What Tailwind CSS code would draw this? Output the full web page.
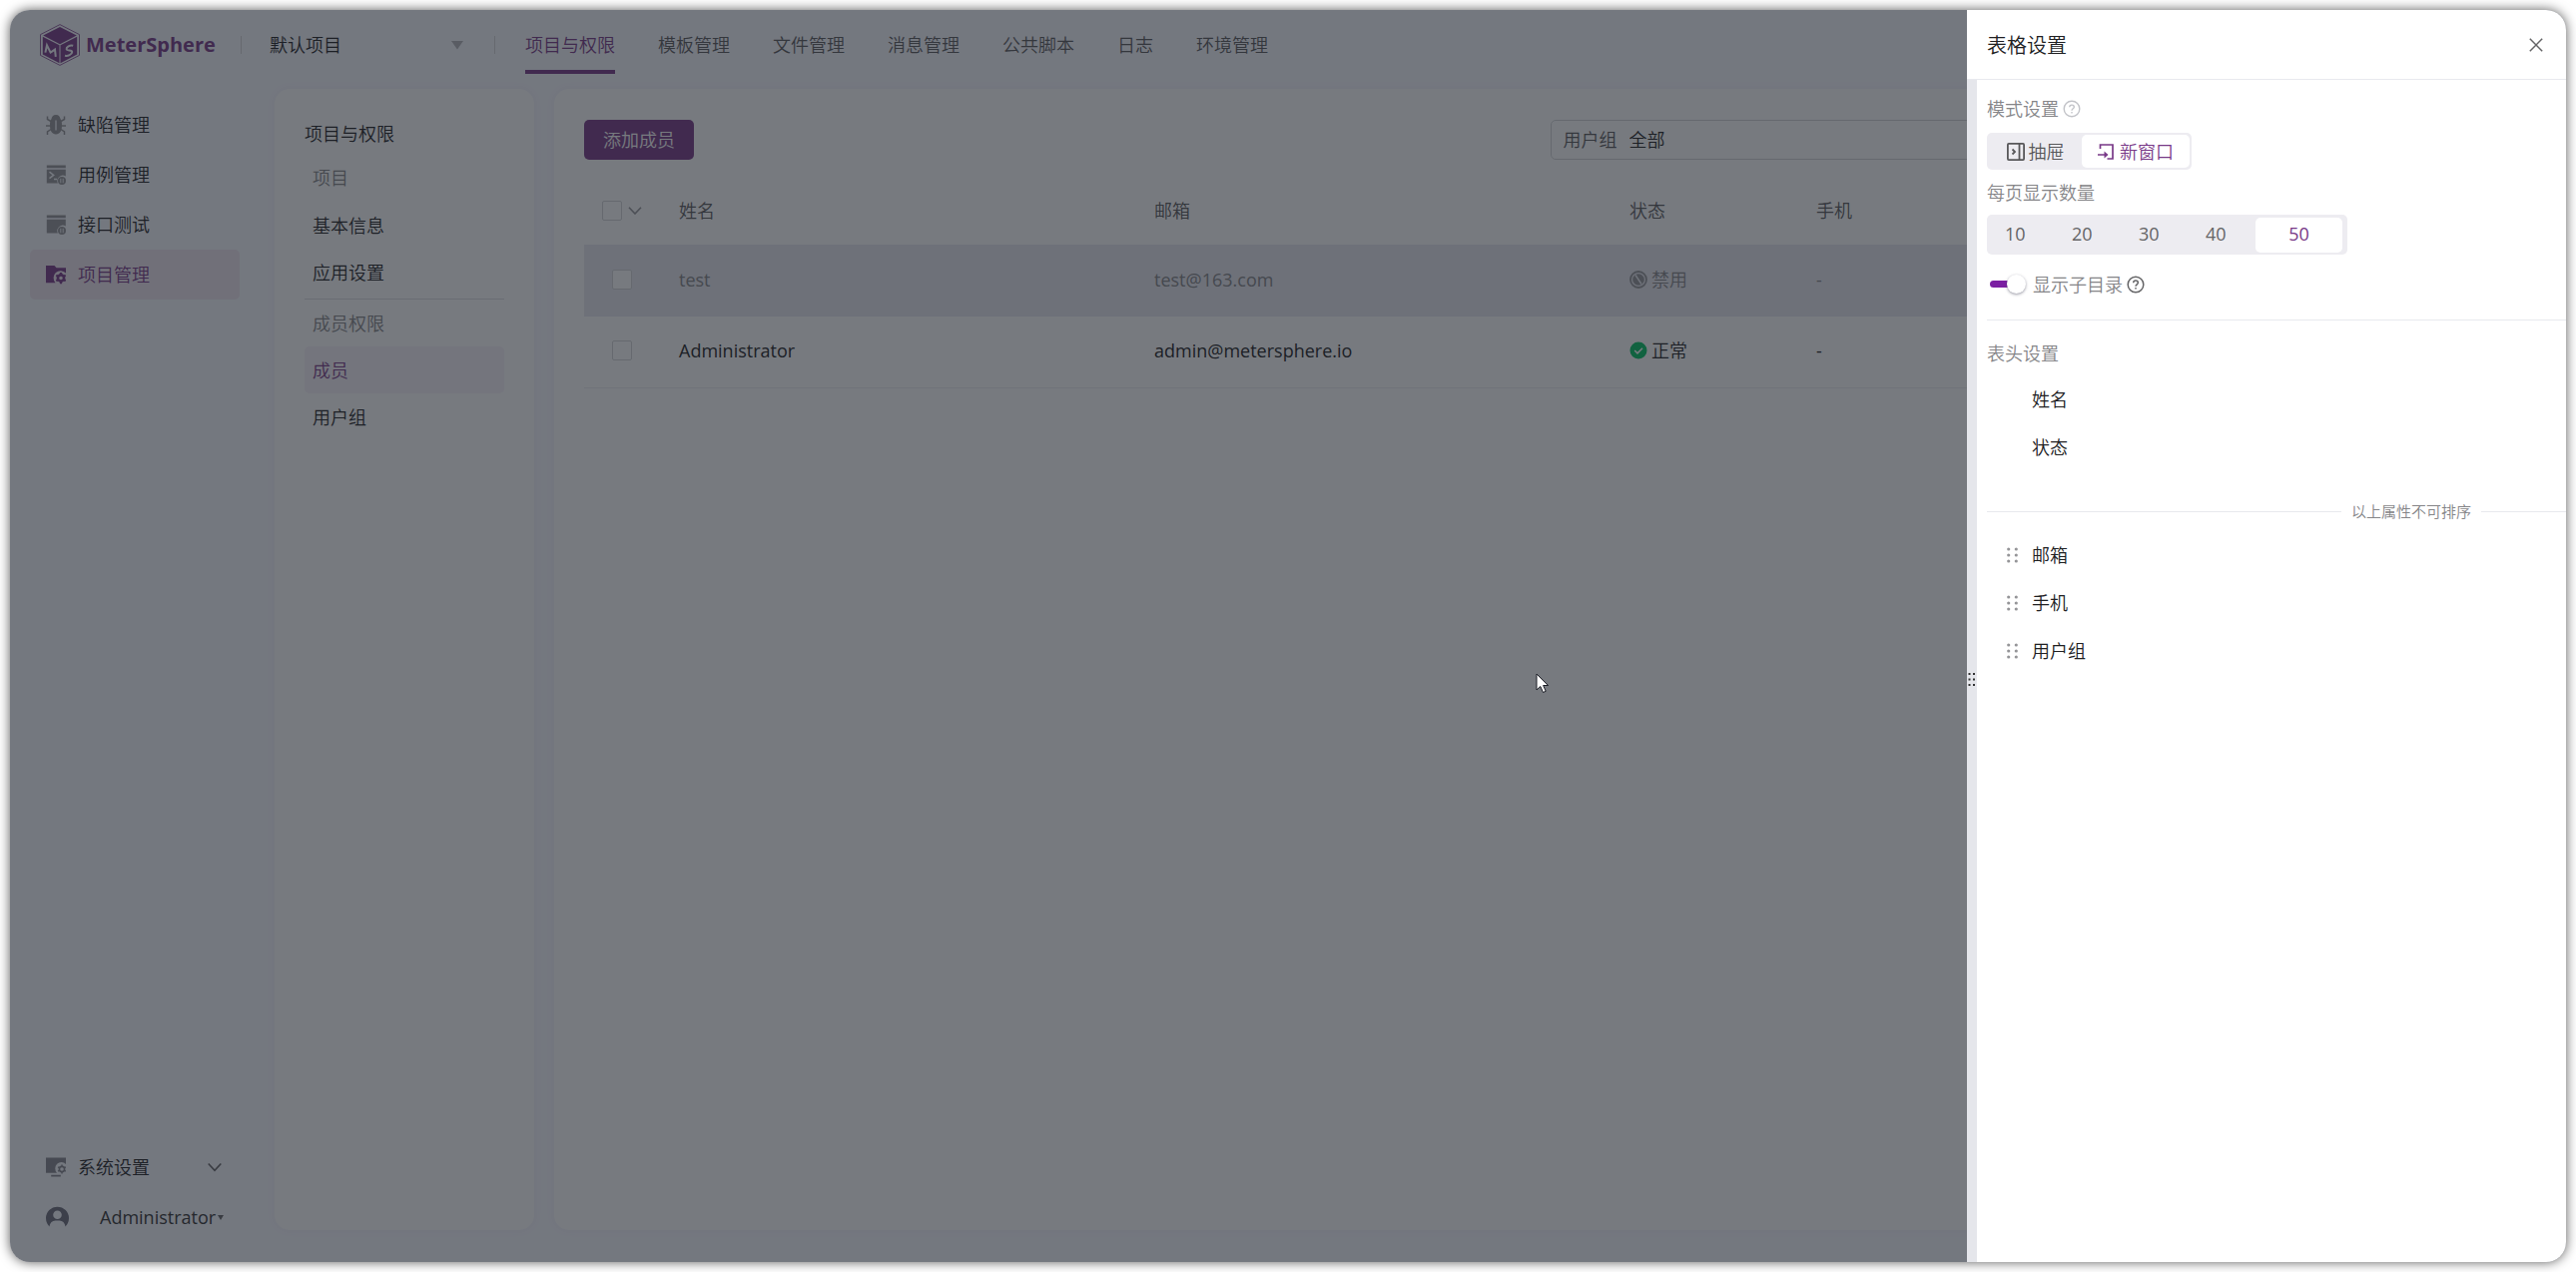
<!DOCTYPE html>
<html lang="zh-CN">
<head>
<meta charset="utf-8">
<meta name="viewport" content="width=device-width, initial-scale=1">
<title>MeterSphere</title>
<script src="https://cdn.jsdelivr.net/npm/@tailwindcss/browser@4"></script>
</head>
<body class="flex min-h-screen bg-white p-2.5 font-['Open_Sans','Noto_Sans_CJK_SC',sans-serif] text-lg/6 font-[350] text-[#202022]">
<div class="relative flex min-w-0 flex-1 flex-col overflow-hidden rounded-[20px] bg-[#f8f9ff] shadow-[0_0_12px_rgba(0,0,0,0.65)]">

  <!-- Top bar -->
  <header class="flex h-[70px] shrink-0 items-center pl-[30px]">
    <a href="#" class="flex w-[201px] items-center gap-1.5 text-[#783887]">
      <svg class="h-[42px] w-10 shrink-0" viewBox="0 0 40 42" fill="none">
        <path d="M20 .6 39.500 10.600V31.400L20 41.400.5 31.400V10.600Z" stroke="currentColor" stroke-width=".8"/>
        <path d="M20 3 36.800 11.600 20 20.200 3.200 11.600Z" fill="currentColor"/>
        <path d="M2.800 12.800 19.500 21.200V39.200L2.800 30.600Z" fill="currentColor"/>
        <path d="M37.200 12.800 20.500 21.200V39.200L37.200 30.600Z" fill="currentColor"/>
        <path d="M5.400 28.600 7 21.200 10.600 28.600 15 25.600 15.800 32.800" stroke="#f8f9ff" stroke-width="2"/>
        <path d="M33.200 21.800C30 20.800 26.200 23.200 26.600 25.400 27 27.400 32.400 25.600 32.200 28.200 32 30.800 28 32.400 25 31.800" stroke="#f8f9ff" stroke-width="2"/>
      </svg>
      <span class="text-xl/6 font-bold">MeterSphere</span>
    </a>
    <div class="h-[18px] w-px bg-[#d4d5d8]"></div>
    <label class="relative ml-[28px] flex w-[225px] items-center">
      <select class="w-full appearance-none bg-transparent" aria-label="项目"><option>默认项目</option></select>
      <svg class="pointer-events-none absolute right-[31px] h-2.5 w-3" viewBox="0 0 12 10"><path d="M0 1h12L6 9.500Z" fill="#b4b5ba"/></svg>
    </label>
    <div class="h-[18px] w-px bg-[#d4d5d8]"></div>
    <nav class="ml-[30px] flex h-full items-center gap-[43px] whitespace-nowrap text-[#58585a]">
      <a href="#" class="relative text-[#783887] after:absolute after:inset-x-0 after:top-[37px] after:h-1 after:bg-[#783887]">项目与权限</a>
      <a href="#">模板管理</a>
      <a href="#">文件管理</a>
      <a href="#">消息管理</a>
      <a href="#">公共脚本</a>
      <a href="#">日志</a>
      <a href="#">环境管理</a>
    </nav>
  </header>

  <div class="flex min-h-0 flex-1">
    <!-- Main menu -->
    <aside class="flex w-[265px] shrink-0 flex-col px-5 pt-5 pb-5">
      <nav class="flex w-[210px] flex-col">
        <a href="#" class="flex h-[50px] items-center gap-3 rounded-[5px] px-4">
          <svg class="size-5 text-[#959598]" viewBox="0 0 20 20" fill="none" stroke="currentColor" stroke-width="1.500"><path d="M10 0C13 0 14 2 14.500 4 15.800 6 16 8 16 10.500 16 16 14 19.500 10 19.500S4 16 4 10.500C4 8 4.200 6 5.500 4 6 2 7 0 10 0Z" fill="currentColor" stroke="none"/><path d="M0 11h5M15 11h5M5 6.500 1.500 4.500V1.500M15 6.500l3.500-2V1.500M5 14.500 1.500 17v3M15 14.500 18.500 17v3"/><path d="M10 5.500V15.500" stroke="#f8f9ff" stroke-width="1.300"/></svg>
          缺陷管理</a>
        <a href="#" class="flex h-[50px] items-center gap-3 rounded-[5px] px-4">
          <svg class="size-5 text-[#959598]" viewBox="0 0 20 20" fill="none"><path d="M.8.500h19v2.800H.8ZM.8 4.800h19v6.600a5.600 5.600 0 0 0-8 7H.8Z" fill="currentColor"/><path d="m3.500 7.200 4.200 3.200-4.200 3.200M8 14.500h3" stroke="#f8f9ff" stroke-width="1.500"/><circle cx="16" cy="16" r="4" fill="currentColor"/><path d="M14.800 13.800v4.400M17.200 13.800v4.400" stroke="#f8f9ff" stroke-width=".9"/></svg>
          用例管理</a>
        <a href="#" class="flex h-[50px] items-center gap-3 rounded-[5px] px-4">
          <svg class="size-5 text-[#959598]" viewBox="0 0 20 20" fill="none"><path d="M.8.500h19v2.800H.8ZM.8 4.800h19v6.600a5.600 5.600 0 0 0-8 7H.8Z" fill="currentColor"/><circle cx="16" cy="16" r="4" fill="currentColor"/><path d="M14.800 13.800v4.400M17.200 13.800v4.400" stroke="#f8f9ff" stroke-width=".9"/></svg>
          接口测试</a>
        <a href="#" class="flex h-[50px] items-center gap-3 rounded-[5px] bg-[#f1e5f1] px-4 text-[#783887]">
          <svg class="size-5" viewBox="0 0 20 20" fill="none"><path d="M0 1h8.500l2 2.200H20V8.500a6.800 6.800 0 0 0-10.500 9.700H0Z" fill="currentColor"/><circle cx="15" cy="13.500" r="3.100" stroke="currentColor" stroke-width="2.600"/><path d="M15 8v2M15 17v2.300M10.300 10.700l1.800 1M17.900 15.200l1.800 1M10.300 16.300l1.800-1M17.900 11.700l1.800-1" stroke="currentColor" stroke-width="2.200"/></svg>
          项目管理</a>
      </nav>
      <div class="mt-auto flex w-[210px] flex-col">
        <button class="flex h-[50px] items-center gap-3 px-4 text-left">
          <svg class="size-5 text-[#85868e]" viewBox="0 0 20 20" fill="none"><path d="M0 .5h20v6.500a6 6 0 0 0-9 8.700H0ZM5.200 17.700H14.800V19.500H5.200Z" fill="currentColor"/><circle cx="16" cy="12" r="2.600" stroke="currentColor" stroke-width="1.600"/><path d="M16 7.500V9.500M16 14.500V16.500M12.100 9.800l1.700 1M18.200 13.200l1.700 1M12.100 14.200l1.700-1M18.200 10.800l1.700-1" stroke="currentColor" stroke-width="1.500"/></svg>
          <span class="flex-1">系统设置</span>
          <svg class="mr-0.5 h-2.5 w-3.5" viewBox="0 0 14 10" fill="none" stroke="#646466" stroke-width="1.600"><path d="m.7 1.500 6.300 6.800 6.300-6.800"/></svg>
        </button>
        <button class="flex h-[50px] items-center pl-4 text-left">
          <svg class="h-[22px] w-[23px] text-[#6c6d7c]" viewBox="0 0 23 22"><path fill-rule="evenodd" d="M3.600 20.500A11.500 11.500 0 1 1 19.400 20.500C19 16.500 16.500 14.800 13.500 14.500H9.500C6.500 14.800 4 16.500 3.600 20.500ZM11.500 4.500a4.300 4.300 0 1 0 0 8.600 4.300 4.300 0 0 0 0-8.600Z" fill="currentColor"/></svg>
          <span class="ml-[31px] font-normal text-[#323233]">Administrator</span>
          <svg class="ml-0.5 h-[5px] w-1.5 shrink-0" viewBox="0 0 6 5"><path d="M0 0h6L3 5Z" fill="#646466"/></svg>
        </button>
      </div>
    </aside>

    <!-- Section menu -->
    <aside class="mt-[9px] mb-8 w-[260px] shrink-0 rounded-[15px] bg-white px-[30px] pt-[33px] shadow-[0_0_10px_rgba(120,56,135,0.05)]">
      <h2>项目与权限</h2>
      <nav class="flex flex-col">
        <div class="mt-5 pl-2 text-[#858588]">项目</div>
        <a href="#" class="mt-3 flex h-[47px] items-center rounded-[5px] pl-2">基本信息</a>
        <a href="#" class="flex h-[47px] items-center rounded-[5px] pl-2">应用设置</a>
        <hr class="mt-[3px] border-[#dcdde0]">
        <div class="mt-3 pl-2 text-[#858588]">成员权限</div>
        <a href="#" class="mt-[11px] flex h-[47px] items-center rounded-[5px] bg-[#f8f2f9] pl-2 text-[#783887]">成员</a>
        <a href="#" class="flex h-[47px] items-center rounded-[5px] pl-2">用户组</a>
      </nav>
    </aside>

    <!-- Members -->
    <main class="mt-[9px] mr-5 mb-8 ml-5 min-w-0 flex-1 rounded-[15px] bg-white px-[30px] pt-[31px] shadow-[0_0_10px_rgba(120,56,135,0.05)]">
      <div class="flex h-10 items-center justify-between">
        <button class="h-10 w-[110px] rounded-[5px] bg-[#783887] text-white">添加成员</button>
        <label class="flex h-10 w-1/2 items-center gap-3 rounded-[5px] border border-[#d4d5d8] px-3 text-[#58585a]">用户组
          <select class="flex-1 appearance-none bg-transparent text-[#202022]"><option>全部</option></select>
        </label>
      </div>
      <table class="mt-[17px] w-full table-fixed text-left">
        <colgroup><col class="w-[83px]"><col class="w-[476px]"><col class="w-[476px]"><col class="w-[187px]"><col></colgroup>
        <thead class="text-[#58585a]">
          <tr class="h-[68px]">
            <th class="pl-[18px] font-[350]"><span class="flex items-center gap-1.5"><input type="checkbox" aria-label="全选" class="size-5 appearance-none rounded-xs border border-[#d4d5d8] bg-white"><svg class="h-2 w-3.5" viewBox="0 0 14 8" fill="none" stroke="#959598" stroke-width="1.600"><path d="m1 .8 6 6.200 6-6.200"/></svg></span></th>
            <th class="pl-3 font-[350]">姓名</th>
            <th class="pl-3 font-[350]">邮箱</th>
            <th class="pl-3 font-[350]">状态</th>
            <th class="pl-3 font-[350]">手机</th>
          </tr>
        </thead>
        <tbody>
          <tr class="h-[72px] bg-[#e8e9f1] text-[#858588]">
            <td class="pb-0.5 pl-7"><input type="checkbox" aria-label="选择 test" class="block size-5 appearance-none rounded-xs border border-[#d4d5d8] bg-white"></td>
            <td class="pb-0.5 pl-3 font-normal">test</td>
            <td class="pb-0.5 pl-3 font-normal">test@163.com</td>
            <td class="pb-0.5 pl-3"><span class="flex items-center gap-1"><svg class="size-[18px]" viewBox="0 0 18 18" fill="none"><circle cx="9" cy="9" r="8" stroke="#959598" stroke-width="1.800"/><circle cx="9" cy="9" r="5.800" fill="#959598"/><path d="m6 4.500 6 9" stroke="#edeef6" stroke-width="1.400"/></svg>禁用</span></td>
            <td class="pb-0.5 pl-3 font-normal">-</td>
          </tr>
          <tr class="h-[71px] border-b border-[#edeef0]">
            <td class="pb-0.5 pl-7"><input type="checkbox" aria-label="选择 Administrator" class="block size-5 appearance-none rounded-xs border border-[#d4d5d8] bg-white"></td>
            <td class="pb-0.5 pl-3 font-normal">Administrator</td>
            <td class="pb-0.5 pl-3 font-normal">admin@metersphere.io</td>
            <td class="pb-0.5 pl-3"><span class="flex items-center gap-1"><svg class="size-[18px]" viewBox="0 0 18 18" fill="none"><circle cx="9" cy="9" r="8.500" fill="#00c261"/><path d="m5.200 9 2.800 2.800 5-5" stroke="#fff" stroke-width="1.600"/></svg>正常</span></td>
            <td class="pb-0.5 pl-3 font-normal">-</td>
          </tr>
        </tbody>
      </table>
    </main>
  </div>

  <!-- Mask under the drawer -->
  <div class="absolute inset-0 bg-[rgb(29,33,41)]/60"></div>

  <!-- Table settings drawer -->
  <section role="dialog" aria-labelledby="drawer-title" class="absolute inset-y-0 right-0 flex w-[600px] flex-col bg-white">
    <header class="flex h-[70px] shrink-0 items-center justify-between border-b border-[#e8e9ee] pr-[23px] pl-5">
      <h1 id="drawer-title" class="pt-0.5 text-xl/6">表格设置</h1>
      <button aria-label="关闭" class="text-[#646466]"><svg class="size-3.5" viewBox="0 0 14 14" fill="none" stroke="currentColor" stroke-width="1.500"><path d="m.8.800 12.400 12.400M13.200.800.800 13.200"/></svg></button>
    </header>
    <div class="flex min-h-0 flex-1">
      <div class="flex w-2.5 shrink-0 items-center justify-center bg-[#e5e6eb] pt-[17px]">
        <svg class="h-4 w-2" viewBox="0 0 8 16" fill="#323233"><path d="M.5 1h2v2h-2ZM5 1h2v2H5ZM.5 6.500h2v2h-2ZM5 6.500h2v2H5ZM.5 12h2v2h-2ZM5 12h2v2H5Z"/></svg>
      </div>
      <div class="min-w-0 flex-1 pt-[17px] pl-2.5">
        <div class="flex items-center gap-1 text-[#858588]">模式设置
          <svg class="size-[18px]" viewBox="0 0 18 18" fill="none" stroke="#c2c3c8" stroke-width="1.400"><circle cx="9" cy="9" r="7.800"/><path d="M6.700 7.300C6.700 4.300 11.300 4.400 11.300 7.200 11.300 8.800 9 8.900 9 10.800M9 12v1.500"/></svg>
        </div>
        <fieldset class="mt-3 flex h-[37px] w-[205px] items-stretch rounded-[5px] bg-[#edecf1] p-0.5">
          <label class="flex w-[93px] items-center justify-center gap-1 text-[#58585a]"><input type="radio" name="mode" class="sr-only">
            <svg class="size-[18px]" viewBox="0 0 18 18" fill="none" stroke="currentColor" stroke-width="1.800"><rect x=".9" y=".9" width="16.200" height="16.200" rx="1"/><path d="M12.500 1v16M5.500 6.500 8 9l-2.500 2.500"/></svg>抽屉</label>
          <label class="flex flex-1 items-center justify-center gap-1.5 rounded-[5px] bg-white text-[#783887]"><input type="radio" name="mode" checked class="sr-only">
            <svg class="size-4" viewBox="0 0 16 16" fill="none" stroke="currentColor" stroke-width="1.700"><path d="M2.500 5V1H15v14H9.500M0 11h9"/><path d="M6.500 7.500 10.500 11l-4 3.500Z" fill="currentColor" stroke="none"/></svg>新窗口</label>
        </fieldset>
        <div class="mt-[11px] text-[#858588]">每页显示数量</div>
        <fieldset class="mt-2.5 flex h-10 w-[361px] items-stretch rounded-[5px] bg-[#edecf1] pt-[3px] pr-[5px] pb-0.5 text-center font-normal text-[#646466]">
          <label class="flex w-[67px] items-center pb-1 pl-[18px]"><input type="radio" name="size" class="sr-only">10</label>
          <label class="flex w-[67px] items-center pb-1 pl-[18px]"><input type="radio" name="size" class="sr-only">20</label>
          <label class="flex w-[67px] items-center pb-1 pl-[18px]"><input type="radio" name="size" class="sr-only">30</label>
          <label class="flex w-[67px] items-center pb-1 pl-[18px]"><input type="radio" name="size" class="sr-only">40</label>
          <label class="ml-auto flex w-[87px] items-center justify-center rounded-[5px] bg-white pb-1 text-[#783887]"><input type="radio" name="size" checked class="sr-only">50</label>
        </fieldset>
        <div class="mt-[18px] flex items-center text-[#858588]">
          <label class="flex items-center gap-[7px]">
            <input type="checkbox" role="switch" checked class="relative h-5 w-[39px] appearance-none before:absolute before:top-[6px] before:left-[3px] before:h-[7px] before:w-7 before:rounded-full before:bg-[#7b1fa2] after:absolute after:top-0 after:right-0 after:h-[19px] after:w-[19px] after:rounded-full after:bg-white after:shadow-[0_1px_3px_rgba(80,80,100,0.6)]">
            显示子目录</label>
          <svg class="ml-1 size-[18px]" viewBox="0 0 18 18" fill="none" stroke="#646466" stroke-width="1.500"><circle cx="9" cy="9" r="7.800"/><path d="M6.700 7.300C6.700 4.300 11.300 4.400 11.300 7.200 11.300 8.800 9 8.900 9 10.800M9 12v1.500"/></svg>
        </div>
        <hr class="mt-[23px] border-[#e8e9ee]">
        <div class="mt-[21px] text-[#858588]">表头设置</div>
        <ul class="mt-2.5">
          <li class="flex h-12 items-center pl-[45px]">姓名</li>
          <li class="flex h-12 items-center pl-[45px]">状态</li>
        </ul>
        <div class="mt-7 flex items-center gap-2.5 text-[15px]/6 text-[#858588]">
          <div class="h-px w-[355px] bg-[#e8e9ee]"></div>以上属性不可排序<div class="h-px flex-1 bg-[#e8e9ee]"></div>
        </div>
        <ul class="mt-2">
          <li class="flex h-12 items-center gap-3.5 pl-5"><svg class="h-4 w-[11px]" viewBox="0 0 11 16" fill="#959598"><circle cx="1.700" cy="2" r="1.600"/><circle cx="9.300" cy="2" r="1.600"/><circle cx="1.700" cy="8" r="1.600"/><circle cx="9.300" cy="8" r="1.600"/><circle cx="1.700" cy="14" r="1.600"/><circle cx="9.300" cy="14" r="1.600"/></svg>邮箱</li>
          <li class="flex h-12 items-center gap-3.5 pl-5"><svg class="h-4 w-[11px]" viewBox="0 0 11 16" fill="#959598"><circle cx="1.700" cy="2" r="1.600"/><circle cx="9.300" cy="2" r="1.600"/><circle cx="1.700" cy="8" r="1.600"/><circle cx="9.300" cy="8" r="1.600"/><circle cx="1.700" cy="14" r="1.600"/><circle cx="9.300" cy="14" r="1.600"/></svg>手机</li>
          <li class="flex h-12 items-center gap-3.5 pl-5"><svg class="h-4 w-[11px]" viewBox="0 0 11 16" fill="#959598"><circle cx="1.700" cy="2" r="1.600"/><circle cx="9.300" cy="2" r="1.600"/><circle cx="1.700" cy="8" r="1.600"/><circle cx="9.300" cy="8" r="1.600"/><circle cx="1.700" cy="14" r="1.600"/><circle cx="9.300" cy="14" r="1.600"/></svg>用户组</li>
        </ul>
      </div>
    </div>
  </section>

  <!-- Pointer -->
  <svg class="pointer-events-none absolute top-[664px] left-[1528px] h-[21px] w-[14px]" viewBox="0 0 14 21"><path d="M1 1v16l3.800-3.500 2.700 6 2.700-1.200-2.600-5.800h5Z" fill="#fff" stroke="#1a1c24"/></svg>
</div>
</body>
</html>
